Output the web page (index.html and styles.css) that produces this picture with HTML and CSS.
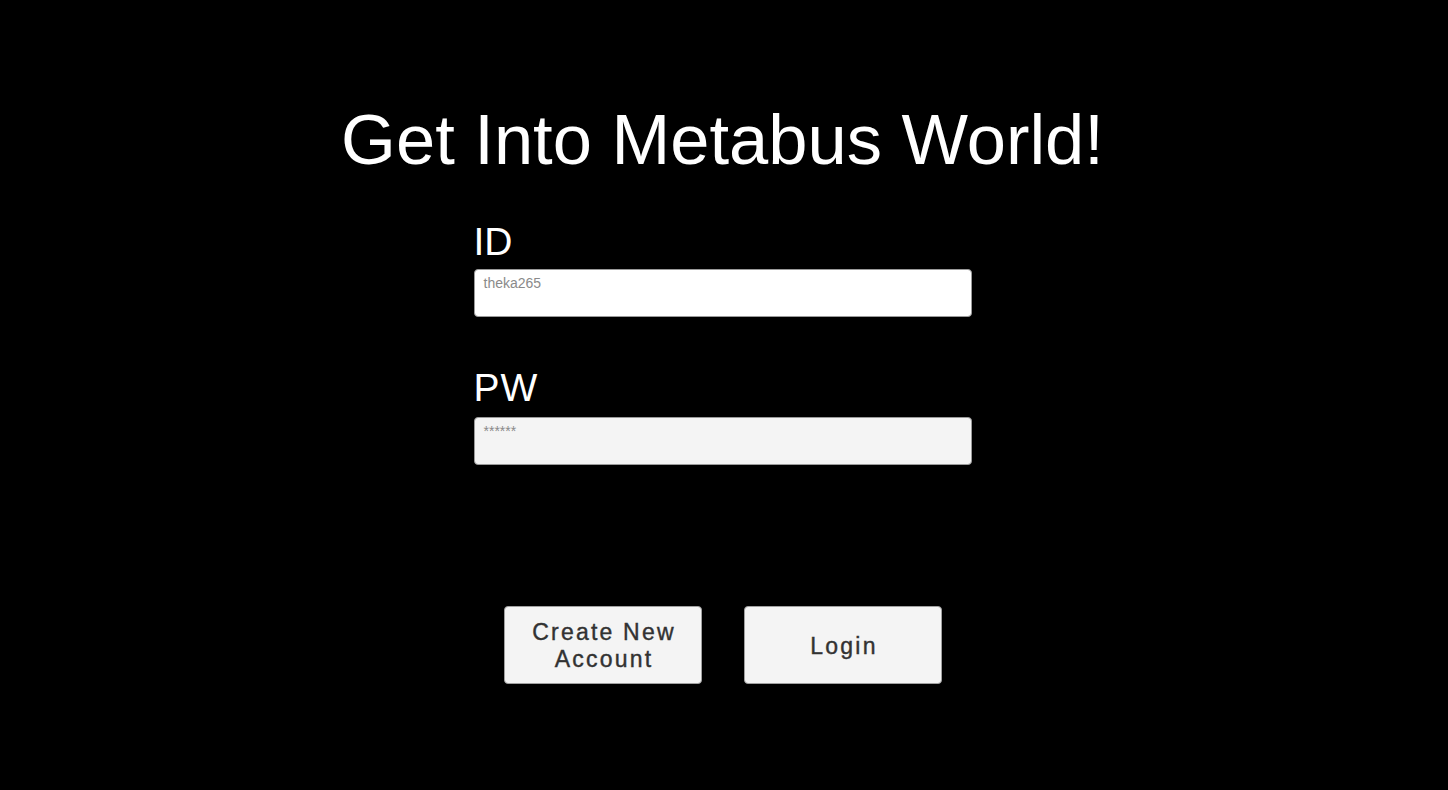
FILE: index.html
```html
<!DOCTYPE html>
<html lang="en">
<head>
<meta charset="utf-8">
<title>Metabus Login</title>
<link rel="stylesheet" href="styles.css">
</head>
<body>
<main class="screen">
  <h1 class="title">Get Into Metabus World!</h1>
  <form class="form">
    <label class="label label-id">ID</label>
    <div class="field field-id"><span class="hint">theka265</span></div>
    <label class="label label-pw">PW</label>
    <div class="field field-pw"><span class="hint">******</span></div>
  </form>
  <div class="actions">
    <button class="btn" type="button">Create New<br>Account</button>
    <button class="btn" type="button">Login</button>
  </div>
</main>
</body>
</html>
```

FILE: styles.css
```css
html, body {
  margin: 0;
  padding: 0;
  background: #000;
}
body {
  width: 1448px;
  height: 790px;
  overflow: hidden;
  font-family: "Liberation Sans", Arial, sans-serif;
}
.screen {
  display: flex;
  flex-direction: column;
  align-items: center;
  padding-right: 3px;
}
.title {
  margin: 105px 0 0 0;
  font-size: 70.5px;
  line-height: 70px;
  font-weight: normal;
  color: #fff;
  white-space: nowrap;
}
.form {
  display: flex;
  flex-direction: column;
  width: 498px;
  margin: 47px 0 0 0;
}
.label {
  font-size: 39px;
  line-height: 39px;
  color: #fff;
}
.label-pw {
  margin-top: 51px;
  letter-spacing: 1px;
}
.field {
  box-sizing: border-box;
  height: 48px;
  margin-top: 8px;
  border: 1px solid #9a9a9a;
  border-radius: 4px;
  background: #fff;
  padding: 6px 0 0 9px;
}
.field-pw {
  margin-top: 10px;
  background: #f4f4f4;
}
.hint {
  display: block;
  font-size: 14px;
  line-height: 14px;
  color: #8a8a8a;
}
.actions {
  display: flex;
  gap: 42px;
  margin-top: 141px;
}
.btn {
  box-sizing: border-box;
  width: 198px;
  height: 78px;
  padding: 2px 0 0 3px;
  border: 1px solid #a0a0a0;
  border-radius: 4px;
  background: #f4f4f4;
  color: #323232;
  -webkit-text-stroke: 0.4px #323232;
  font-family: "Liberation Sans", Arial, sans-serif;
  font-size: 23px;
  line-height: 27px;
  letter-spacing: 2.2px;
  text-align: center;
}
```
